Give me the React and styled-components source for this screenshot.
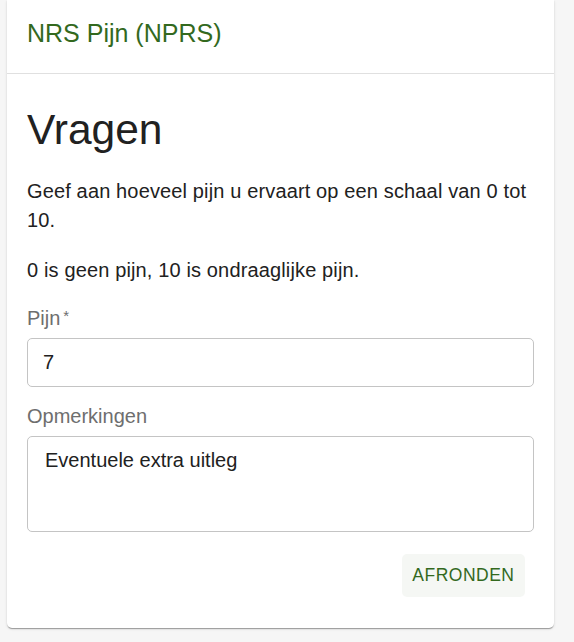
import React from "react";
import styled, { createGlobalStyle } from "styled-components";

const Global = createGlobalStyle`
  html, body {
    margin: 0;
    padding: 0;
    background: #f6f6f6;
    font-family: "Liberation Sans", Arial, Helvetica, sans-serif;
  }
  * { box-sizing: border-box; }
`;

const Page = styled.div`
  padding: 0 20px 14px 7px;
`;

const Card = styled.section`
  background: #fff;
  border-radius: 0 0 5px 5px;
  box-shadow: 0 2px 1px -1px rgba(0,0,0,0.2), 0 1px 1px 0 rgba(0,0,0,0.14), 0 1px 3px 0 rgba(0,0,0,0.12);
`;

const Header = styled.header`
  padding: 17px 20px 23px;
  border-bottom: 1px solid #e0e0e0;
`;

const Title = styled.h2`
  margin: 0;
  font-size: 25px;
  line-height: 33.35px;
  font-weight: 400;
  color: #33691e;
`;

const Body = styled.div`
  padding: 20px 20px 31px;
`;

const Heading = styled.h1`
  margin: 10px 0 20.5px;
  font-size: 42.5px;
  line-height: 52.5px;
  font-weight: 400;
  color: #212121;
`;

const Paragraph = styled.p`
  margin: 0 0 ${(p) => (p.$last ? 0 : 21)}px;
  font-size: 20px;
  line-height: 29px;
  letter-spacing: 0.14px;
  color: #212121;
`;

const Field = styled.div`
  margin-top: ${(p) => p.$gap}px;
  display: flex;
  flex-direction: column;
`;

const Label = styled.label`
  font-size: 20px;
  line-height: 25px;
  color: #6e6e6e;
  margin-bottom: 7px;
`;

const Asterisk = styled.span`
  font-size: 15px;
  vertical-align: 4px;
`;

const Input = styled.input`
  height: 49px;
  border: 1px solid #c4c4c4;
  border-radius: 5px;
  padding: 0 15px;
  font: inherit;
  font-size: 20px;
  line-height: 23px;
  color: #212121;
  background: #fff;
  outline: none;
`;

const TextArea = styled.textarea`
  height: 96px;
  border: 1px solid #c4c4c4;
  border-radius: 5px;
  padding: 12px 17px;
  font: inherit;
  font-size: 20px;
  line-height: 23px;
  color: #212121;
  background: #fff;
  resize: none;
  outline: none;
`;

const Actions = styled.div`
  display: flex;
  justify-content: flex-end;
  margin-top: 22px;
  padding-right: 9.5px;
`;

const Button = styled.button`
  height: 43px;
  padding: 0 10px;
  border: none;
  border-radius: 5px;
  background: rgba(51, 105, 30, 0.05);
  color: #33691e;
  font-family: inherit;
  font-size: 17.5px;
  letter-spacing: 0.5px;
  text-transform: uppercase;
  cursor: pointer;
`;

export default function App() {
  return (
    <Page>
      <Global />
      <Card>
        <Header>
          <Title>NRS Pijn (NPRS)</Title>
        </Header>
        <Body>
          <Heading>Vragen</Heading>
          <Paragraph>Geef aan hoeveel pijn u ervaart op een schaal van 0 tot 10.</Paragraph>
          <Paragraph $last>0 is geen pijn, 10 is ondraaglijke pijn.</Paragraph>
          <Field $gap={18}>
            <Label>
              Pijn<Asterisk>{"\u2009*"}</Asterisk>
            </Label>
            <Input defaultValue="7" />
          </Field>
          <Field $gap={17}>
            <Label>Opmerkingen</Label>
            <TextArea defaultValue="Eventuele extra uitleg" />
          </Field>
          <Actions>
            <Button>Afronden</Button>
          </Actions>
        </Body>
      </Card>
    </Page>
  );
}
